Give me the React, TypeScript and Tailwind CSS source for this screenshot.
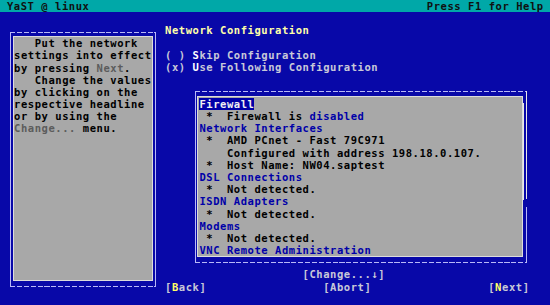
import React from "react";

const ROW = "h-[12.2px] leading-[12.2px] whitespace-pre";
const LINE = "#b8b8f8";

function HDash() {
  return (
    <div className="h-[1px] w-full bg-[repeating-linear-gradient(90deg,#b8b8f8_0px,#b8b8f8_5.2px,transparent_5.2px,transparent_6.875px)]" />
  );
}

function Blue({ children }: { children: React.ReactNode }) {
  return <span className="text-[#0000a8]">{children}</span>;
}

function Dim({ children }: { children: React.ReactNode }) {
  return <span className="text-[#5c5c5c]">{children}</span>;
}

function Hot({ children }: { children: React.ReactNode }) {
  return <span className="text-[#ffff66]">{children}</span>;
}

export default function App() {
  const helpLines: React.ReactNode[] = [
    "   Put the network",
    "settings into effect",
    <>
      by pressing <Dim>Next</Dim>.
    </>,
    "   Change the values",
    "by clicking on the",
    "respective headline",
    "or by using the",
    <>
      <Dim>Change...</Dim> menu.
    </>,
  ];

  const richLines: React.ReactNode[] = [
    <span className="bg-[#0000a8] text-[#f0f0f0]">Firewall</span>,
    <>
      {" *  Firewall is "}
      <Blue>disabled</Blue>
    </>,
    <Blue>Network Interfaces</Blue>,
    " *  AMD PCnet - Fast 79C971",
    "    Configured with address 198.18.0.107.",
    " *  Host Name: NW04.saptest",
    <Blue>DSL Connections</Blue>,
    " *  Not detected.",
    <Blue>ISDN Adapters</Blue>,
    " *  Not detected.",
    <Blue>Modems</Blue>,
    " *  Not detected.",
    <Blue>VNC Remote Administration</Blue>,
  ];

  return (
    <div className="w-[550px] h-[305px] overflow-hidden bg-[#0808a8] font-['DejaVu_Sans_Mono',monospace] text-[10.5px] tracking-[0.554px] font-bold">
      {/* top bar */}
      <div className="h-[12.2px] leading-[12.2px] bg-[#00a8a8] text-[#101010] flex justify-between pl-[6.875px] pr-[6.3px] whitespace-pre">
        <span>YaST @ linux</span>
        <span>Press F1 for Help</span>
      </div>

      <div className="flex">
        {/* left help panel */}
        <div className="mt-[19.8px] ml-[10px] w-[146px] h-[255px] flex flex-col">
          <HDash />
          <div className="flex flex-1 mt-[3px] mb-[5px]">
            <div className="w-[1px] -mt-[4px] -mb-[5px]" style={{ backgroundColor: LINE }} />
            <div className="ml-[2px] w-[140px] h-[245px] bg-[#a8a8a8] border border-[#dcdcdc] text-black">
              <div className="pt-[0.2px]">
                {helpLines.map((l, i) => (
                  <div key={i} className={ROW}>
                    {l}
                  </div>
                ))}
              </div>
            </div>
            <div className="ml-[2px] w-[1px] -mt-[4px] -mb-[5px]" style={{ backgroundColor: LINE }} />
          </div>
          <HDash />
        </div>

        {/* right column */}
        <div className="ml-[9px] flex flex-col">
          <div className="h-[12.2px]" />
          <div className={`${ROW} text-[#ffffa8]`}>Network Configuration</div>
          <div className="h-[12.2px]" />
          <div className={`${ROW} text-[#c8c8d8]`}>
            ( ) <span className="text-white">S</span>kip Configuration
          </div>
          <div className={`${ROW} text-[#c8c8d8]`}>
            (x) <span className="text-white">U</span>se Following Configuration
          </div>
          <div className="h-[12.2px]" />

          {/* overview frame */}
          <div className="h-[183px]">
            <div className="mt-[6px] ml-[30px] w-[332px] h-[172px] flex flex-col">
              <HDash />
              <div className="flex flex-1 mt-[4px] mb-[5px]">
                <div className="w-[1px] -mt-[5px] -mb-[5px]" style={{ backgroundColor: LINE }} />
                <div className="ml-[1px] w-[326px] h-[161px] bg-[#a8a8a8] border border-[#dcdcdc] text-black pl-[1.4px]">
                  <div className="pt-[0.6px]">
                    {richLines.map((l, i) => (
                      <div key={i} className={ROW}>
                        {l}
                      </div>
                    ))}
                  </div>
                </div>
                {/* scrollbar */}
                <div className="w-[3px] flex flex-col -mt-[5px] -mb-[5px]">
                  <div className="mt-[12px] h-[97px] w-[1px] bg-[#e8e8e8]" />
                </div>
                <div className="w-[1px] flex flex-col -mt-[5px] -mb-[5px]">
                  <div className="h-[108px]" style={{ backgroundColor: "#e8e8e8" }} />
                  <div className="h-[8px]" />
                  <div className="flex-1" style={{ backgroundColor: LINE }} />
                </div>
              </div>
              <HDash />
            </div>
          </div>

          <div className={`${ROW} text-[#c8c8d8]`}>{"                    [Change...↓]"}</div>
          <div className={`${ROW} text-[#c8c8d8]`}>
            [<Hot>B</Hot>ack]{"                 "}[Abort]{"                 "}[<Hot>N</Hot>ext]
          </div>
        </div>
      </div>
    </div>
  );
}
